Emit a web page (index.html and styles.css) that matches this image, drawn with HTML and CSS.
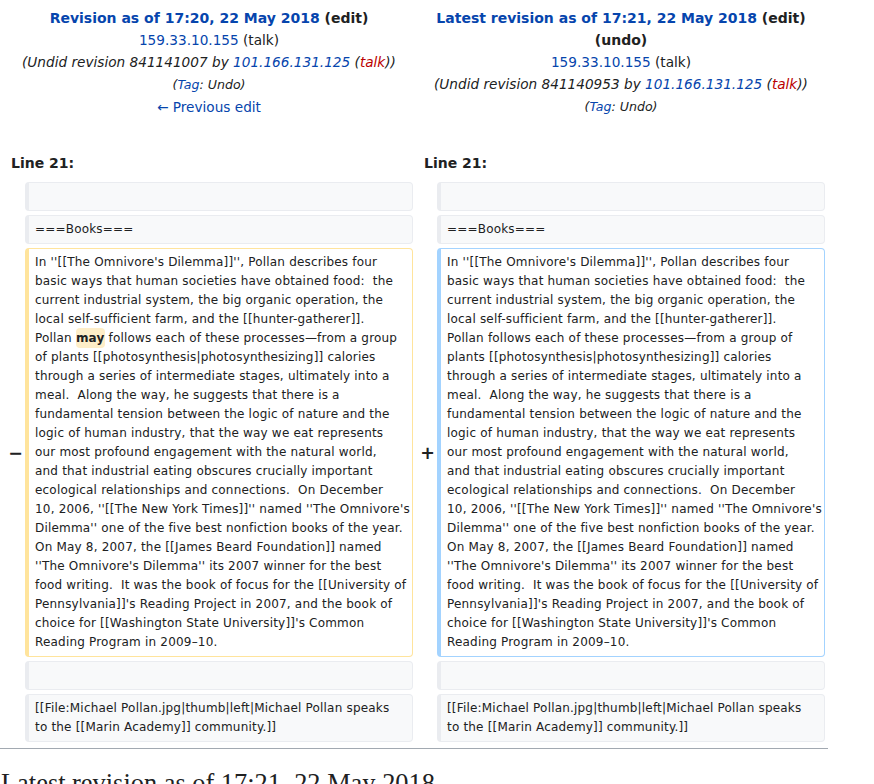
FILE: index.html
```html
<!DOCTYPE html>
<html lang="en">
<head>
<meta charset="utf-8">
<title>Diff</title>
<link rel="stylesheet" href="styles.css">
</head>
<body>
<div class="diff">
  <div class="title">
    <div class="tline"><strong><a class="lnk">Revision as of 17:20, 22 May 2018</a> <span class="dark">(edit)</span></strong></div>
    <div class="tline sm"><a class="lnk">159.33.10.155</a> <span class="dark">(talk)</span></div>
    <div class="tline sm"><em>(Undid revision 841141007 by <a class="lnk">101.166.131.125</a> (<a class="red">talk</a>))</em></div>
    <div class="tline tag"><em>(<a class="lnk">Tag</a>: Undo)</em></div>
    <div class="tline sm"><a class="lnk">← Previous edit</a></div>
  </div>
  <div class="title">
    <div class="tline"><strong><a class="lnk">Latest revision as of 17:21, 22 May 2018</a> <span class="dark">(edit)</span> <span class="dark">(undo)</span></strong></div>
    <div class="tline sm"><a class="lnk">159.33.10.155</a> <span class="dark">(talk)</span></div>
    <div class="tline sm"><em>(Undid revision 841140953 by <a class="lnk">101.166.131.125</a> (<a class="red">talk</a>))</em></div>
    <div class="tline tag"><em>(<a class="lnk">Tag</a>: Undo)</em></div>
  </div>

  <div class="lineno">Line 21:</div>
  <div class="lineno">Line 21:</div>

  <div class="marker"></div>
  <div class="line context"><br></div>
  <div class="marker"></div>
  <div class="line context"><br></div>

  <div class="marker"></div>
  <div class="line context">===Books===</div>
  <div class="marker"></div>
  <div class="line context">===Books===</div>

  <div class="marker">−</div>
  <div class="line deleted">In ''[[The Omnivore's Dilemma]]'', Pollan describes four
basic ways that human societies have obtained food:  the
current industrial system, the big organic operation, the
local self-sufficient farm, and the [[hunter-gatherer]].
Pollan <span class="change">may</span> follows each of these processes—from a group
of plants [[photosynthesis|photosynthesizing]] calories
through a series of intermediate stages, ultimately into a
meal.  Along the way, he suggests that there is a
fundamental tension between the logic of nature and the
logic of human industry, that the way we eat represents
our most profound engagement with the natural world,
and that industrial eating obscures crucially important
ecological relationships and connections.  On December
10, 2006, ''[[The New York Times]]'' named ''The Omnivore's
Dilemma'' one of the five best nonfiction books of the year.
On May 8, 2007, the [[James Beard Foundation]] named
''The Omnivore's Dilemma'' its 2007 winner for the best
food writing.  It was the book of focus for the [[University of
Pennsylvania]]'s Reading Project in 2007, and the book of
choice for [[Washington State University]]'s Common
Reading Program in 2009–10.</div>
  <div class="marker plus">+</div>
  <div class="line added">In ''[[The Omnivore's Dilemma]]'', Pollan describes four
basic ways that human societies have obtained food:  the
current industrial system, the big organic operation, the
local self-sufficient farm, and the [[hunter-gatherer]].
Pollan follows each of these processes—from a group of
plants [[photosynthesis|photosynthesizing]] calories
through a series of intermediate stages, ultimately into a
meal.  Along the way, he suggests that there is a
fundamental tension between the logic of nature and the
logic of human industry, that the way we eat represents
our most profound engagement with the natural world,
and that industrial eating obscures crucially important
ecological relationships and connections.  On December
10, 2006, ''[[The New York Times]]'' named ''The Omnivore's
Dilemma'' one of the five best nonfiction books of the year.
On May 8, 2007, the [[James Beard Foundation]] named
''The Omnivore's Dilemma'' its 2007 winner for the best
food writing.  It was the book of focus for the [[University of
Pennsylvania]]'s Reading Project in 2007, and the book of
choice for [[Washington State University]]'s Common
Reading Program in 2009–10.</div>

  <div class="marker"></div>
  <div class="line context"><br></div>
  <div class="marker"></div>
  <div class="line context"><br></div>

  <div class="marker"></div>
  <div class="line context">[[File:Michael Pollan.jpg|thumb|left|Michael Pollan speaks
to the [[Marin Academy]] community.]]</div>
  <div class="marker"></div>
  <div class="line context">[[File:Michael Pollan.jpg|thumb|left|Michael Pollan speaks
to the [[Marin Academy]] community.]]</div>
</div>
<hr class="sep">
<h2 class="current">Latest revision as of 17:21, 22 May 2018</h2>
</body>
</html>
```
FILE: styles.css
```css
html, body {
  margin: 0;
  padding: 0;
  background: #fff;
}
body {
  font-family: "DejaVu Sans", sans-serif;
  color: #202122;
}
.diff {
  display: grid;
  grid-template-columns: 16px 388px 16px 388px;
  column-gap: 4px;
  row-gap: 4px;
  padding: 4px 4px 4px 5px;
  width: 820px;
}
.title {
  grid-column: span 2;
  text-align: center;
  font-size: 14px;
  line-height: 22px;
  padding: 3px 0 30px;
}
.tline.sm {
  font-size: 13.65px;
}
.tline.tag {
  font-size: 12.6px;
  line-height: 23px;
}
.tline strong {
  font-weight: bold;
}
.lnk {
  color: #0645ad;
  text-decoration: none;
}
.dark {
  color: #202122;
}
.red {
  color: #ba0000;
}
em {
  font-style: italic;
}
.lineno {
  grid-column: span 2;
  font-size: 14px;
  font-weight: bold;
  line-height: 22px;
  padding: 0 6px 4px;
}
.lineno + .lineno {
  padding-left: 7px;
}
.marker {
  font-size: 17.5px;
  font-weight: bold;
  text-align: right;
  align-self: center;
  margin-right: -2px;
}
.line {
  font-size: 12px;
  letter-spacing: 0.19px;
  line-height: 19px;
  padding: 4px 6px;
  border-style: solid;
  border-width: 1px 1px 1px 4px;
  border-radius: 4px;
  white-space: pre;
  overflow: visible;
  color: #202122;
}
.context {
  background: #f8f9fa;
  border-color: #eaecf0;
}
.deleted {
  border-color: #ffe49c;
}
.added {
  border-color: #a3d3ff;
}
.change {
  font-weight: bold;
  background: #feeec8;
  border-radius: 4px;
  padding: 3px 0;
}
.sep {
  margin: 2px 0 0;
  width: 828px;
  border: 0;
  border-top: 1px solid #a2a9b1;
  height: 0;
}
.current {
  font-family: "Liberation Serif", serif;
  font-weight: normal;
  font-size: 26.4px;
  margin: 19px 0 0 1px;
  line-height: 30px;
}
```
